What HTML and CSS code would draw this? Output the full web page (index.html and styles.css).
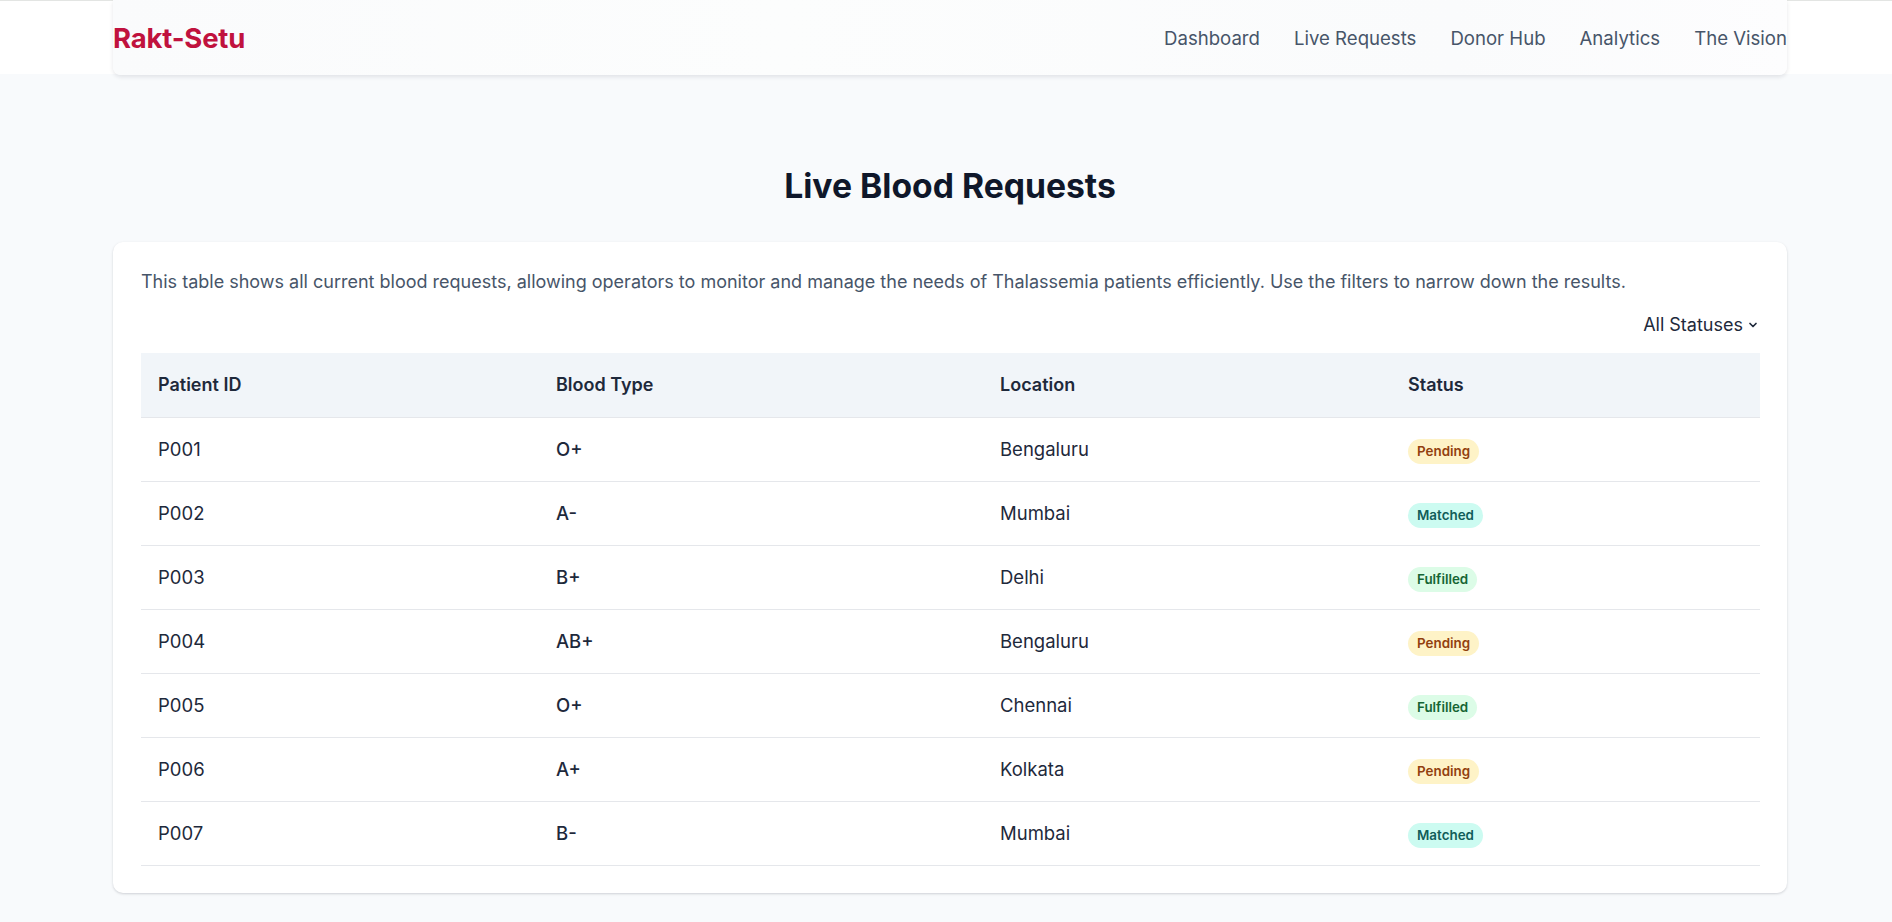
FILE: index.html
```html
<!DOCTYPE html>
<html lang="en">
<head>
<meta charset="utf-8">
<title>Rakt-Setu — Live Blood Requests</title>
<link rel="stylesheet" href="styles.css">
</head>
<body>
<header class="site-header">
  <div class="header-inner">
    <div class="logo">Rakt-Setu</div>
    <nav class="nav">
      <a href="#">Dashboard</a>
      <a href="#">Live Requests</a>
      <a href="#">Donor Hub</a>
      <a href="#">Analytics</a>
      <a href="#">The Vision</a>
    </nav>
  </div>
</header>
<main class="main">
  <h1 class="page-title">Live Blood Requests</h1>
  <section class="card">
    <p class="intro">This table shows all current blood requests, allowing operators to monitor and manage the needs of Thalassemia patients efficiently. Use the filters to narrow down the results.</p>
    <div class="filter-row">
      <div class="select">
        <span>All Statuses</span>
        <svg class="chevron" viewBox="0 0 20 20" width="12" height="12"><path d="M5 7.5l5 5 5-5" fill="none" stroke="#1e293b" stroke-width="2.8" stroke-linecap="round" stroke-linejoin="round"/></svg>
      </div>
    </div>
    <table class="table">
      <colgroup>
        <col class="c1"><col class="c2"><col class="c3"><col class="c4">
      </colgroup>
      <thead>
        <tr><th>Patient ID</th><th>Blood Type</th><th>Location</th><th>Status</th></tr>
      </thead>
      <tbody>
        <tr><td>P001</td><td class="bt">O+</td><td>Bengaluru</td><td><span class="badge pending">Pending</span></td></tr>
        <tr><td>P002</td><td class="bt">A-</td><td>Mumbai</td><td><span class="badge matched">Matched</span></td></tr>
        <tr><td>P003</td><td class="bt">B+</td><td>Delhi</td><td><span class="badge fulfilled">Fulfilled</span></td></tr>
        <tr><td>P004</td><td class="bt">AB+</td><td>Bengaluru</td><td><span class="badge pending">Pending</span></td></tr>
        <tr><td>P005</td><td class="bt">O+</td><td>Chennai</td><td><span class="badge fulfilled">Fulfilled</span></td></tr>
        <tr><td>P006</td><td class="bt">A+</td><td>Kolkata</td><td><span class="badge pending">Pending</span></td></tr>
        <tr><td>P007</td><td class="bt">B-</td><td>Mumbai</td><td><span class="badge matched">Matched</span></td></tr>
      </tbody>
    </table>
  </section>
</main>
</body>
</html>
```
FILE: styles.css
```css
* { box-sizing: border-box; }
html, body { margin: 0; padding: 0; }
body {
  background: #f8fafc;
  font-family: Inter, "Noto Sans", "Liberation Sans", sans-serif;
  color: #1e293b;
}
.site-header {
  background: #ffffff;
  border-top: 1px solid #e3e5e3;
  height: 74px;
  position: relative;
  z-index: 2;
}
.header-inner {
  margin: 0 105px 0 113px;
  height: 75px;
  margin-top: -1px;
  display: flex;
  align-items: center;
  justify-content: space-between;
  background: linear-gradient(to right, #fafbfc, #fcfdfd 40%, #fafbfc 80%, #fdfdfe);
  box-shadow: 0 2px 4px rgba(15, 23, 42, 0.10);
  border-radius: 0 0 8px 8px;
}
.logo {
  color: #c0123e;
  font-weight: 700;
  font-size: 27.5px;
  letter-spacing: -0.2px;
}
.nav {
  display: flex;
  gap: 34px;
}
.nav a {
  color: #475569;
  text-decoration: none;
  font-size: 18.6px;
  font-weight: 400;
}
.main {
  padding: 92px 105px 40px 113px;
}
.page-title {
  margin: 0 0 36px;
  text-align: center;
  font-size: 33.7px;
  line-height: 40px;
  font-weight: 700;
  color: #0f172a;
}
.card {
  background: #ffffff;
  border-radius: 10px;
  box-shadow: 0 1px 3px rgba(15, 23, 42, 0.12), 0 1px 2px rgba(15, 23, 42, 0.06);
  padding: 28px 28px 27px;
}
.intro {
  margin: 0;
  font-size: 18px;
  line-height: 24px;
  color: #475569;
}
.filter-row {
  height: 59px;
  padding-top: 2px;
  display: flex;
  justify-content: flex-end;
  align-items: center;
}
.select {
  display: flex;
  align-items: center;
  gap: 4px;
  font-size: 18px;
  color: #1e293b;
  padding: 2px 0 2px 6px;
}
.chevron { display: block; }
.table {
  width: 100%;
  border-collapse: collapse;
  table-layout: fixed;
}
.c1 { width: 398px; }
.c2 { width: 444px; }
.c3 { width: 408px; }
.c4 { width: 369px; }
.table thead tr { background: #f1f5f9; }
.table th {
  text-align: left;
  font-weight: 600;
  font-size: 18px;
  color: #1e293b;
  height: 64px;
  padding: 0 17px;
  border-bottom: 1px solid #e5e7eb;
}
.table td {
  height: 64px;
  padding: 0 17px;
  font-size: 18.5px;
  color: #1e293b;
  border-bottom: 1px solid #e5e7eb;
}
.table td.bt { font-weight: 500; }
.badge {
  display: inline-block;
  font-size: 13.4px;
  line-height: 19px;
  font-weight: 600;
  padding: 3px 9px;
  border-radius: 999px;
  vertical-align: -4px;
}
.pending { background: #fef3c7; color: #92400e; }
.matched { background: #ccfbf1; color: #115e59; }
.fulfilled { background: #dcfce7; color: #166534; }
```
